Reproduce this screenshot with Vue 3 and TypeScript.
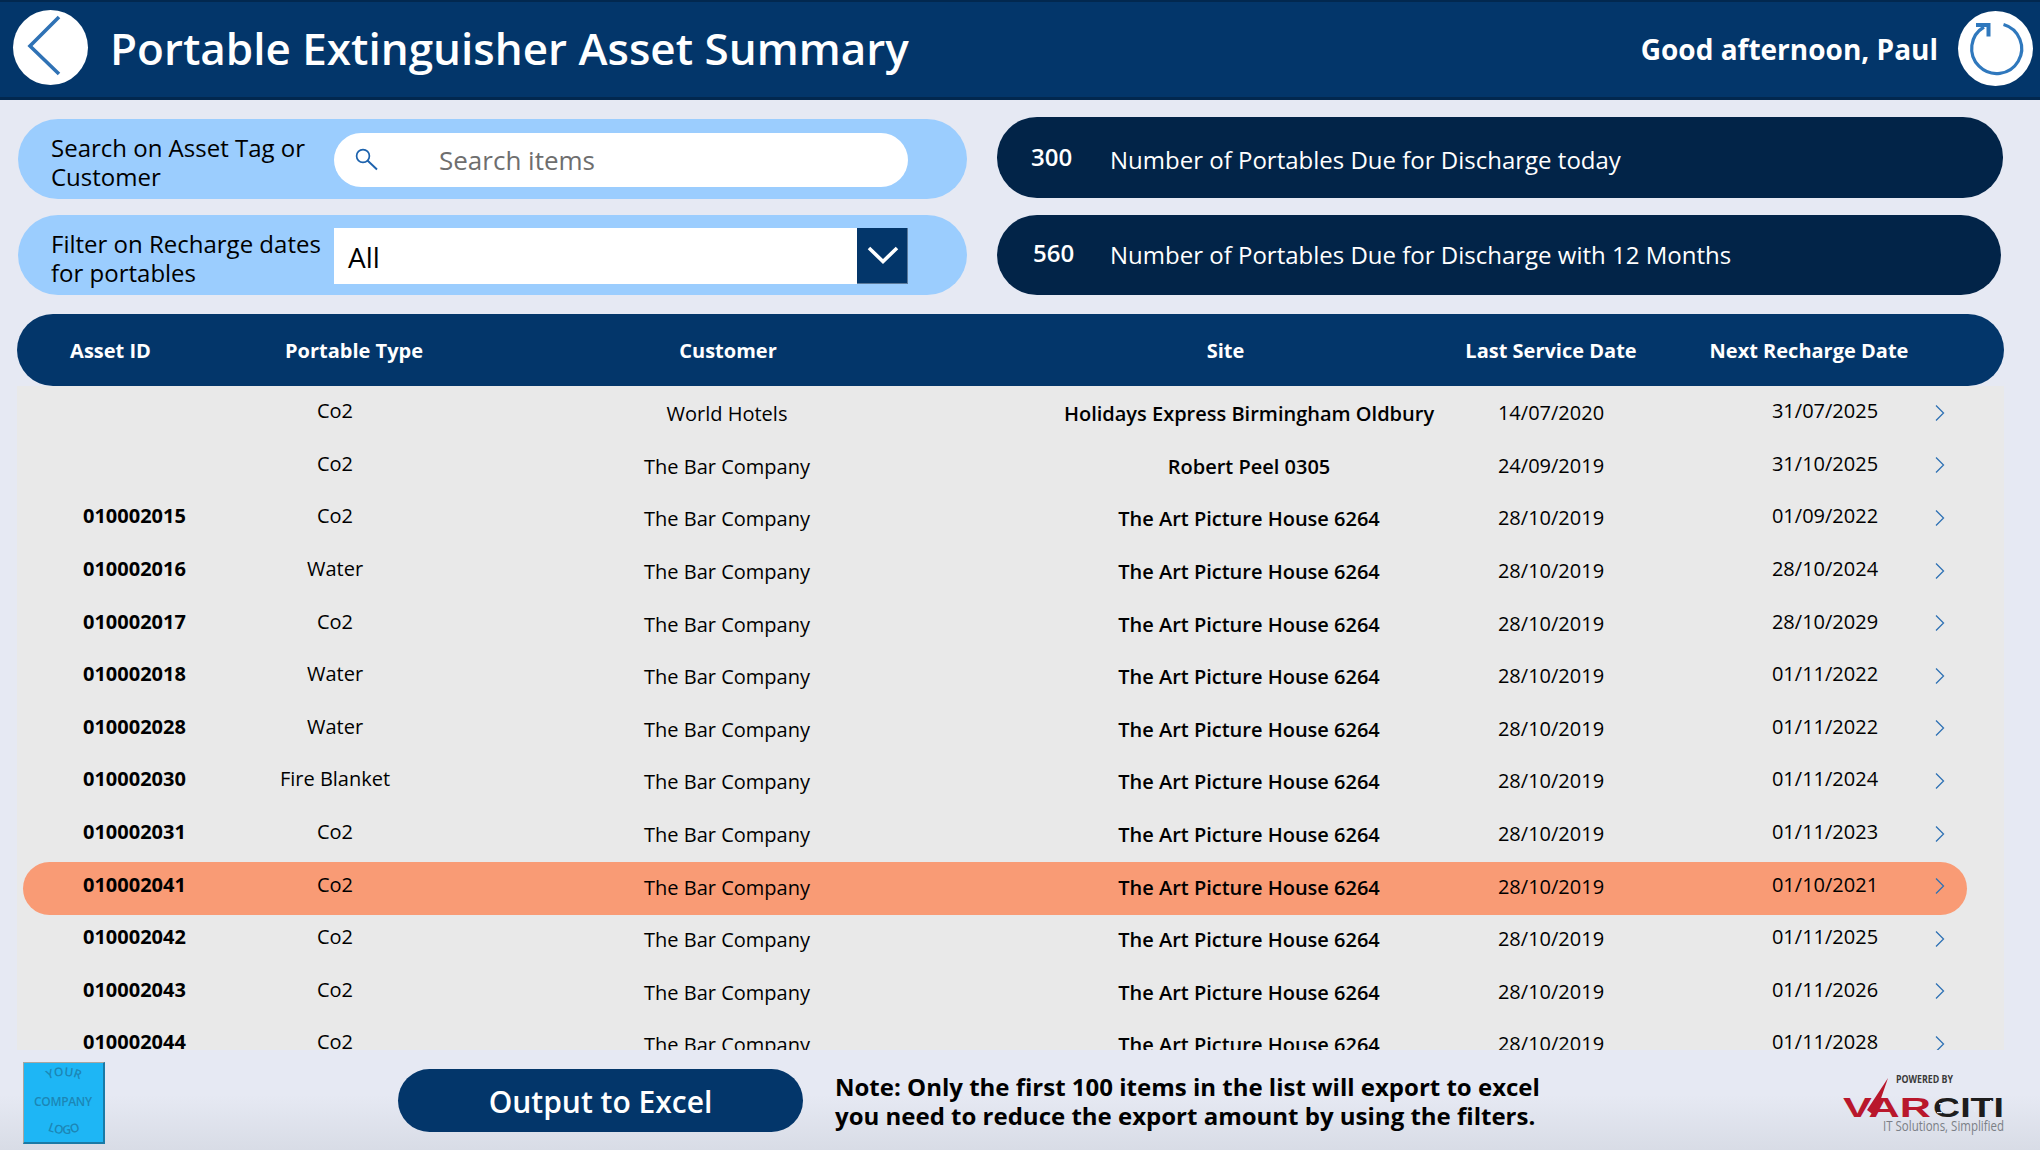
<script setup lang="ts">
interface Row { id: string; type: string; customer: string; site: string; last: string; next: string; active?: boolean }
const art = 'The Art Picture House 6264'
const bar = 'The Bar Company'
const d = '28/10/2019'
const rows: Row[] = [
  { id: '', type: 'Co2', customer: 'World Hotels', site: 'Holidays Express Birmingham Oldbury', last: '14/07/2020', next: '31/07/2025' },
  { id: '', type: 'Co2', customer: bar, site: 'Robert Peel 0305', last: '24/09/2019', next: '31/10/2025' },
  { id: '010002015', type: 'Co2', customer: bar, site: art, last: d, next: '01/09/2022' },
  { id: '010002016', type: 'Water', customer: bar, site: art, last: d, next: '28/10/2024' },
  { id: '010002017', type: 'Co2', customer: bar, site: art, last: d, next: '28/10/2029' },
  { id: '010002018', type: 'Water', customer: bar, site: art, last: d, next: '01/11/2022' },
  { id: '010002028', type: 'Water', customer: bar, site: art, last: d, next: '01/11/2022' },
  { id: '010002030', type: 'Fire Blanket', customer: bar, site: art, last: d, next: '01/11/2024' },
  { id: '010002031', type: 'Co2', customer: bar, site: art, last: d, next: '01/11/2023' },
  { id: '010002041', type: 'Co2', customer: bar, site: art, last: d, next: '01/10/2021', active: true },
  { id: '010002042', type: 'Co2', customer: bar, site: art, last: d, next: '01/11/2025' },
  { id: '010002043', type: 'Co2', customer: bar, site: art, last: d, next: '01/11/2026' },
  { id: '010002044', type: 'Co2', customer: bar, site: art, last: d, next: '01/11/2028' },
]
const specks: number[][] = [
  [103, 33, 4, 1.5], [109, 40, 3, 1.5], [101, 42, 5, 1.2], [122, 29, 1.5, 4], [123, 40, 1.5, 3],
  [133, 32, 4, 1.2], [138, 38, 1.5, 4], [154, 30, 1.5, 4], [155, 41, 1.5, 3],
]
</script>

<template>
  <div class="page">
    <header class="top">
      <button class="round back" aria-label="Back">
        <svg width="75" height="75" viewBox="0 0 75 75"><path d="M46 7 L17 36 L46 64" fill="none" stroke="#2f72b5" stroke-width="3.6" /></svg>
      </button>
      <h1>Portable Extinguisher Asset Summary</h1>
      <span class="greet">Good afternoon, Paul</span>
      <button class="round refresh" aria-label="Refresh">
        <svg width="75" height="75" viewBox="0 0 75 75">
          <path d="M45.5 13.5 A25 25 0 1 1 26 16" fill="none" stroke="#2f78bd" stroke-width="3.2" />
          <path d="M18 14 H30.5 V25.5" fill="none" stroke="#2f78bd" stroke-width="4" />
        </svg>
      </button>
    </header>

    <section class="controls">
      <div class="panel">
        <label class="plabel">Search on Asset Tag or Customer</label>
        <div class="search">
          <svg width="24" height="26" viewBox="0 0 24 26"><circle cx="8" cy="10" r="6.4" fill="none" stroke="#1c62ad" stroke-width="1.7" /><path d="M12.5 14.5 L22 23.5" stroke="#1c62ad" stroke-width="1.9" /></svg>
          <span>Search items</span>
        </div>
      </div>
      <div class="stat first">
        <span class="num">300</span>
        <span class="stext">Number of Portables Due for Discharge today</span>
      </div>
      <div class="panel">
        <label class="plabel">Filter on Recharge dates for portables</label>
        <div class="select">
          <span class="val">All</span>
          <span class="drop">
            <svg width="32" height="20" viewBox="0 0 32 20"><path d="M2 3 L16 16.5 L30 3" fill="none" stroke="#fff" stroke-width="3.6" /></svg>
          </span>
        </div>
      </div>
      <div class="stat second">
        <span class="num n2">560</span>
        <span class="stext">Number of Portables Due for Discharge with 12 Months</span>
      </div>
    </section>

    <section class="table">
      <div class="thead">
        <span>Asset ID</span>
        <span>Portable Type</span>
        <span>Customer</span>
        <span>Site</span>
        <span>Last Service Date</span>
        <span>Next Recharge Date</span>
      </div>
      <div class="tbody">
        <div v-for="(r, i) in rows" :key="i" class="row" :class="{ active: r.active }">
          <span class="c-id">{{ r.id }}</span>
          <span class="c-type">{{ r.type }}</span>
          <span class="c-cust">{{ r.customer }}</span>
          <span class="c-site">{{ r.site }}</span>
          <span class="c-last">{{ r.last }}</span>
          <span class="c-next">{{ r.next }}</span>
          <span class="c-arrow">
            <svg width="10" height="16" viewBox="0 0 10 16"><path d="M1 0.5 L8.5 8 L1 15.5" fill="none" stroke="#2f72b5" stroke-width="1.3" /></svg>
          </span>
        </div>
      </div>
    </section>

    <footer class="foot">
      <div class="logo">
        <svg width="82" height="81" viewBox="0 0 82 81">
          <defs>
            <path id="arcTop" d="M18 21 Q41 7 64 21" />
            <path id="arcBot" d="M20 66 Q41 78 62 66" />
          </defs>
          <text class="lg" text-anchor="middle"><textPath href="#arcTop" startOffset="50%">YOUR</textPath></text>
          <text class="lg" x="40" y="44" text-anchor="middle" textLength="58">COMPANY</text>
          <text class="lg" text-anchor="middle"><textPath href="#arcBot" startOffset="50%">LOGO</textPath></text>
        </svg>
      </div>
      <button class="excel">Output to Excel</button>
      <p class="note">Note: Only the first 100 items in the list will export to excel<br />you need to reduce the export amount by using the filters.</p>
      <svg class="brand" width="170" height="70" viewBox="0 0 170 70">
        <text x="60" y="13" class="pw" textLength="57" lengthAdjust="spacingAndGlyphs">POWERED BY</text>
        <path d="M31 40 L52 8 L39 46 Z" fill="#b9172c" />
        <text x="7" y="47" class="vw red" textLength="88" lengthAdjust="spacingAndGlyphs">VAR</text>
        <text x="97" y="47" class="vw dark" textLength="71" lengthAdjust="spacingAndGlyphs">CITI</text>
        <rect v-for="(s, i) in specks" :key="i" :x="s[0]" :y="s[1]" :width="s[2]" :height="s[3]" fill="#e6e9f3" />
        <text x="47" y="61" class="tg" textLength="121" lengthAdjust="spacingAndGlyphs">IT Solutions, Simplified</text>
      </svg>
    </footer>
  </div>
</template>

<style>
html, body { margin: 0; background: #e6e9f3; }
</style>

<style scoped>
.page {
  width: 2040px;
  height: 1150px;
  overflow: hidden;
  background: #e6e9f3;
  font-family: "Open Sans", "Liberation Sans", sans-serif;
  color: #000;
  display: flex;
  flex-direction: column;
}
button { border: 0; padding: 0; font: inherit; }
.top {
  height: 100px;
  box-sizing: border-box;
  flex: none;
  background: #03366a;
  border-top: 2px solid #02284f;
  border-bottom: 3px solid #02284f;
  display: flex;
  align-items: center;
  padding: 0 7px 0 13px;
  color: #fff;
}
.round {
  width: 75px;
  height: 75px;
  border-radius: 50%;
  background: #fff;
  flex: none;
  display: flex;
}
.back { margin-top: -4px; }
.refresh { margin-top: -2px; }
h1 {
  margin: -4px 0 0 22px;
  font-size: 44px;
  font-weight: 600;
  line-height: 60px;
  flex: 1;
}
.greet { font-size: 28px; font-weight: 700; margin-right: 20px; margin-top: -1px; }
.controls {
  display: grid;
  grid-template-columns: 949px 1006px;
  column-gap: 30px;
  row-gap: 16px;
  padding: 19px 0 0 18px;
  flex: none;
}
.panel {
  height: 80px;
  border-radius: 40px;
  background: #9bcdfe;
  display: flex;
  align-items: center;
  box-sizing: border-box;
  padding-left: 33px;
}
.plabel { width: 283px; font-size: 24px; line-height: 29px; flex: none; padding-top: 5px; }
.search {
  width: 574px;
  height: 54px;
  margin-top: 1px;
  border-radius: 27px;
  background: #fff;
  display: flex;
  align-items: center;
  padding-left: 21px;
  box-sizing: border-box;
  color: #6e6e6e;
  font-size: 26px;
}
.search svg { margin-right: 60px; margin-bottom: 2px; flex: none; }
.search span { line-height: 54px; padding-top: 1px; }
.select {
  width: 574px;
  height: 56px;
  margin-top: 1px;
  background: #fff;
  display: flex;
  align-items: center;
  font-size: 28px;
}
.val { flex: 1; padding-left: 14px; padding-top: 2px; }
.drop {
  width: 51px;
  height: 56px;
  box-sizing: border-box;
  background: #03366a;
  border-right: 1px solid #5b7a9b;
  border-bottom: 1px solid #5b7a9b;
  display: flex;
  align-items: center;
  justify-content: center;
  padding-left: 1px;
}
.stat {
  height: 80px;
  border-radius: 40px;
  background: #022448;
  color: #fff;
  display: flex;
  align-items: center;
  font-size: 24px;
}
.stat.first { margin-top: -2px; height: 81px; }
.stat.second { margin-right: 2px; }
.num { width: 113px; padding-left: 34px; box-sizing: border-box; font-weight: 600; flex: none; }
.first .num { margin-top: -3px; }
.first .stext { margin-top: 3px; }
.num.n2 { padding-left: 36px; margin-top: -5px; }
.second .stext { margin-top: -1px; }
.table {
  margin: 19px 36px 0 17px;
  flex: 1;
  min-height: 0;
  display: flex;
  flex-direction: column;
}
.thead {
  height: 72px;
  flex: none;
  border-radius: 36px;
  background: #03366a;
  color: #fff;
  font-size: 20px;
  font-weight: 700;
  display: grid;
  grid-template-columns: 187px 300px 448px 547px 104px 412px;
  align-items: center;
}
.thead span { justify-self: center; white-space: nowrap; }
.tbody {
  height: 664px;
  flex: none;
  background: #e9e9e9;
  overflow: hidden;
  padding-top: 3px;
  box-sizing: border-box;
  font-size: 20px;
}
.row {
  height: 52.6px;
  margin: 0 37px 0 6px;
  border-radius: 27px;
  display: grid;
  grid-template-columns: 234px 156px 628px 416px 188px 282px 1fr;
  align-items: center;
  text-align: center;
}
.row.active { background: #f99b75; }
.row > span { line-height: 28px; white-space: nowrap; }
.c-id { font-weight: 700; text-align: left; padding-left: 60px; margin-top: -8px; }
.c-type { margin-top: -8px; }
.c-cust { margin-top: -2px; }
.c-site { font-weight: 600; margin-top: -2px; }
.c-last { margin-top: -4px; }
.c-next { margin-top: -8px; padding-left: 78px; }
.c-arrow { display: flex; padding-left: 8px; margin-top: -5px; }
.foot {
  height: 100px;
  flex: none;
  background: linear-gradient(#e6e9f3 45%, #d8dce6);
  display: flex;
  align-items: flex-start;
}
.logo {
  width: 82px;
  height: 82px;
  margin: 12px 0 0 23px;
  box-sizing: border-box;
  background: #1eb6f5;
  border-top: 1px solid #a8a6a0;
  border-left: 1px solid #a8a6a0;
  border-right: 2px solid #1a7aa6;
  border-bottom: 2px solid #1a7aa6;
  flex: none;
  overflow: hidden;
}
.logo svg { display: block; margin: -1px; }
.lg { font-size: 12px; fill: #1c86b5; font-family: "Open Sans", sans-serif; font-weight: 600; }
.excel {
  width: 405px;
  height: 63px;
  margin: 19px 0 0 293px;
  border-radius: 32px;
  background: #03366a;
  color: #fff;
  font-size: 30px;
  font-weight: 600;
  padding-top: 1px;
  flex: none;
}
.note {
  margin: 22px 0 0 32px;
  font-size: 24px;
  font-weight: 700;
  line-height: 29px;
  flex: 1;
}
.brand { margin: 20px 34px 0 0; flex: none; display: block; }
.pw { font-size: 10px; font-weight: 700; fill: #3a3a3a; font-family: "Open Sans", sans-serif; }
.vw { font-size: 27px; font-weight: 700; font-family: "Liberation Sans", sans-serif; }
.red { fill: #b9172c; }
.dark { fill: #1d1d1d; }
.tg { font-size: 14px; fill: #7b7f86; font-family: "Open Sans", sans-serif; }
</style>
